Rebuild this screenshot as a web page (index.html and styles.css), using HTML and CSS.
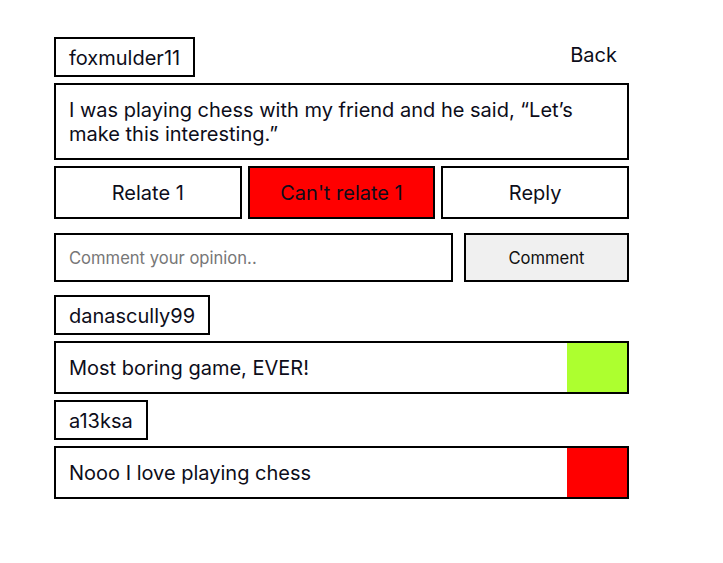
FILE: index.html
```html
<!DOCTYPE html>
<html>
<head>
<meta charset="utf-8">
<link rel="stylesheet" href="styles.css">
</head>
<body>
<div class="page">
  <div class="header">
    <div class="user">foxmulder11</div>
    <div class="back">Back</div>
  </div>
  <div class="post">I was playing chess with my friend and he said, “Let’s make this interesting.”</div>
  <div class="actions">
    <button class="act">Relate 1</button>
    <button class="act act-red">Can't relate 1</button>
    <button class="act">Reply</button>
  </div>
  <div class="comment-form">
    <input class="comment-input" type="text" placeholder="Comment your opinion..">
    <button class="comment-btn">Comment</button>
  </div>
  <div class="user">danascully99</div>
  <div class="comment">
    <div class="comment-text">Most boring game, EVER!</div>
    <div class="swatch swatch-green"></div>
  </div>
  <div class="user">a13ksa</div>
  <div class="comment">
    <div class="comment-text">Nooo I love playing chess</div>
    <div class="swatch swatch-red"></div>
  </div>
</div>
</body>
</html>
```

FILE: styles.css
```css
html, body {
  margin: 0;
  padding: 0;
  background: #fff;
}
body {
  font-family: Inter, "Noto Sans", sans-serif;
  color: #0d0d1a;
}
.page {
  width: 575px;
  margin-left: 54px;
  padding-top: 37px;
  display: flex;
  flex-direction: column;
  align-items: flex-start;
}
.header {
  align-self: stretch;
  display: flex;
  justify-content: space-between;
  align-items: center;
}
.user {
  border: 2px solid #000;
  padding: 7px 13px 5px;
  font-size: 20px;
  line-height: 24px;
  height: 24px;
}
.back {
  font-size: 20px;
  line-height: 24px;
  margin-right: 12px;
  margin-top: -4px;
}
.post {
  align-self: stretch;
  margin-top: 6px;
  border: 2px solid #000;
  padding: 13px 13px 12px;
  font-size: 20px;
  line-height: 24px;
}
.actions {
  align-self: stretch;
  margin-top: 6px;
  display: grid;
  grid-template-columns: 1fr 1fr 1fr;
  gap: 6px;
}
.act {
  height: 53px;
  border: 2px solid #000;
  background: #fff;
  font-family: Inter, "Noto Sans", sans-serif;
  font-size: 20px;
  color: #0d0d1a;
  padding: 0;
}
.act-red {
  background: #ff0000;
}
.comment-form {
  align-self: stretch;
  margin-top: 14px;
  display: flex;
  gap: 11px;
}
.comment-input {
  width: 399px;
  box-sizing: border-box;
  height: 49px;
  border: 2px solid #000;
  padding: 0 13px;
  font-family: Inter, "Noto Sans", sans-serif;
  font-size: 16.6px;
  outline: none;
}
.comment-input::placeholder {
  color: #777;
}
.comment-btn {
  flex: 1;
  height: 49px;
  border: 2px solid #000;
  background: #f0f0f0;
  font-family: Inter, "Noto Sans", sans-serif;
  font-size: 16.6px;
  color: #111;
  padding: 0;
}
.comment-form + .user {
  margin-top: 13px;
}
.comment {
  align-self: stretch;
  margin-top: 6px;
  margin-bottom: 6px;
  border: 2px solid #000;
  height: 49px;
  display: flex;
  align-items: center;
}
.comment-text {
  flex: 1;
  padding-left: 13px;
  font-size: 20px;
  line-height: 24px;
}
.swatch {
  width: 60px;
  height: 49px;
}
.swatch-green {
  background: #adff2f;
}
.swatch-red {
  background: #ff0000;
}
```
